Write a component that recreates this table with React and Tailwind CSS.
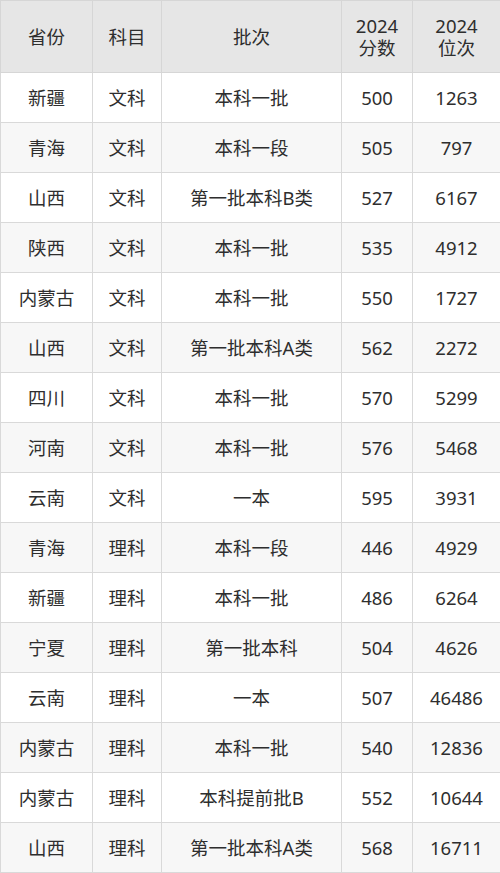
import React from "react";

const rows = [
  ["新疆", "文科", "本科一批", "500", "1263"],
  ["青海", "文科", "本科一段", "505", "797"],
  ["山西", "文科", "第一批本科B类", "527", "6167"],
  ["陕西", "文科", "本科一批", "535", "4912"],
  ["内蒙古", "文科", "本科一批", "550", "1727"],
  ["山西", "文科", "第一批本科A类", "562", "2272"],
  ["四川", "文科", "本科一批", "570", "5299"],
  ["河南", "文科", "本科一批", "576", "5468"],
  ["云南", "文科", "一本", "595", "3931"],
  ["青海", "理科", "本科一段", "446", "4929"],
  ["新疆", "理科", "本科一批", "486", "6264"],
  ["宁夏", "理科", "第一批本科", "504", "4626"],
  ["云南", "理科", "一本", "507", "46486"],
  ["内蒙古", "理科", "本科一批", "540", "12836"],
  ["内蒙古", "理科", "本科提前批B", "552", "10644"],
  ["山西", "理科", "第一批本科A类", "568", "16711"],
];

export default function App() {
  return (
    <div
      className="w-[500px] h-[873px] bg-white text-[#2e2e2e] overflow-hidden"
      style={{ fontFamily: '"Noto Sans", "Noto Sans CJK SC", sans-serif' }}
    >
      <table className="w-[500px] table-fixed border-collapse text-[18.5px] text-center">
        <colgroup>
          <col className="w-[92px]" />
          <col className="w-[69px]" />
          <col className="w-[180px]" />
          <col className="w-[71px]" />
          <col className="w-[88px]" />
        </colgroup>
        <thead>
          <tr className="h-[72px] bg-[#e6e6e6]">
            <th className="border border-[#d6d6d6] font-normal">省份</th>
            <th className="border border-[#d6d6d6] font-normal">科目</th>
            <th className="border border-[#d6d6d6] font-normal">批次</th>
            <th className="border border-[#d6d6d6] font-normal leading-[22px]">
              2024
              <br />
              分数
            </th>
            <th className="border border-[#d6d6d6] font-normal leading-[22px]">
              2024
              <br />
              位次
            </th>
          </tr>
        </thead>
        <tbody>
          {rows.map((r, i) => (
            <tr
              key={i}
              className={i % 2 === 0 ? "h-[50px] bg-white" : "h-[50px] bg-[#f7f7f7]"}
            >
              {r.map((c, j) => (
                <td key={j} className="border border-[#d9d9d9] p-0">
                  {c}
                </td>
              ))}
            </tr>
          ))}
        </tbody>
      </table>
    </div>
  );
}
